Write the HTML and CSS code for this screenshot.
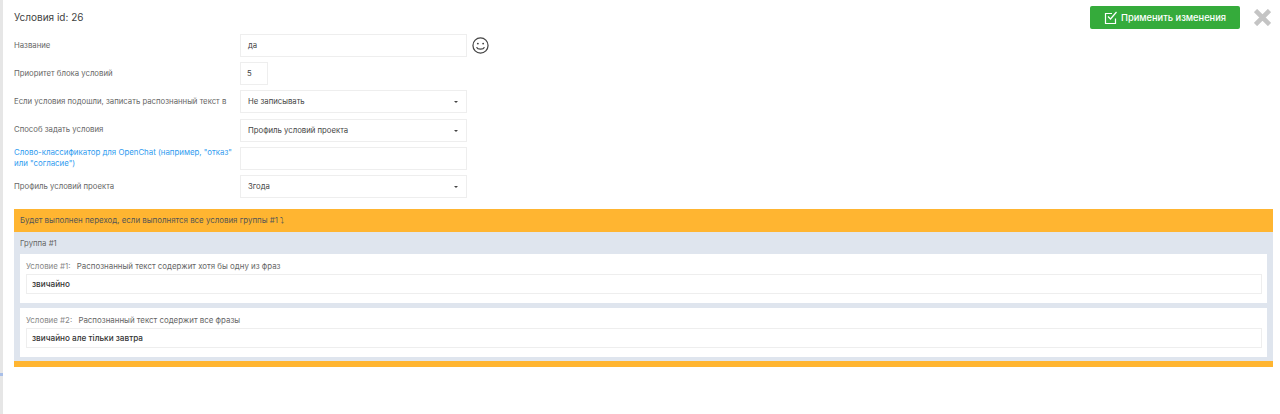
FILE: index.html
```html
<!DOCTYPE html>
<html lang="ru">
<head>
    <meta charset="UTF-8">
    <title>Условия id: 26</title>
    <link rel="stylesheet" href="styles.css">
</head>
<body>
    <div class="modal">
        <div class="modal-head">
            <div class="modal-title">Условия id: 26</div>
            <button class="btn-apply" type="button">
                <svg class="btn-icon" width="14" height="14" viewBox="0 0 14 14" fill="none" stroke="#fff" stroke-width="1.2">
                    <path d="M11.5 7.5V12.5H1.5V2.5H8"/>
                    <path d="M4 5.5L6.5 8L12.5 1"/>
                </svg>
                Применить изменения
            </button>
            <svg class="btn-close" width="17" height="17" viewBox="0 0 17 17" stroke="#c4c4c4" stroke-width="4.6">
                <path d="M1.5 1.5L15.5 15.5M15.5 1.5L1.5 15.5"/>
            </svg>
        </div>

        <div class="form">
            <div class="form-row">
                <label class="form-label">Название</label>
                <div class="field field-wide">да</div>
                <svg class="smile" width="17" height="17" viewBox="0 0 18 18" fill="none" stroke="#444" stroke-width="1.3">
                    <circle cx="9" cy="9" r="8"/>
                    <circle cx="6.2" cy="7" r="1" fill="#444" stroke="none"/>
                    <circle cx="11.8" cy="7" r="1" fill="#444" stroke="none"/>
                    <path d="M4.8 10.8C6 13.6 12 13.6 13.2 10.8"/>
                </svg>
            </div>
            <div class="form-row">
                <label class="form-label">Приоритет блока условий</label>
                <div class="field field-small">5</div>
            </div>
            <div class="form-row">
                <label class="form-label">Если условия подошли, записать распознанный текст в</label>
                <div class="field field-wide field-select">Не записывать<span class="caret"></span></div>
            </div>
            <div class="form-row">
                <label class="form-label">Способ задать условия</label>
                <div class="field field-wide field-select">Профиль условий проекта<span class="caret"></span></div>
            </div>
            <div class="form-row">
                <label class="form-label form-label-link">Слово-классификатор для OpenChat (например, "отказ" или "согласие")</label>
                <div class="field field-wide"></div>
            </div>
            <div class="form-row">
                <label class="form-label">Профиль условий проекта</label>
                <div class="field field-wide field-select">Згода<span class="caret"></span></div>
            </div>
        </div>

        <div class="rules">
            <div class="rules-head">Будет выполнен переход, если выполнятся все условия группы #1 ⤵</div>
            <div class="group">
                <div class="group-title">Группа #1</div>
                <div class="cond">
                    <div class="cond-title"><span class="cond-num">Условие #1:</span> Распознанный текст содержит хотя бы одну из фраз</div>
                    <div class="cond-input">звичайно</div>
                </div>
                <div class="cond">
                    <div class="cond-title"><span class="cond-num">Условие #2:</span> Распознанный текст содержит все фразы</div>
                    <div class="cond-input">звичайно але тільки завтра</div>
                </div>
            </div>
        </div>
    </div>
</body>
</html>
```

FILE: styles.css
```css
body {
    margin: 0;
    background-color: #fff;
    font-family: Inter, "Noto Sans", sans-serif;
    font-size: 7.75px;
    color: #555;
    overflow: hidden;
}

.modal {
    box-sizing: border-box;
    position: relative;
    min-height: 100vh;
    padding: 6px 7px 0 11px;
    border-left: 3px solid #e6e6e6;
}

/* кусочек синей полоски за окном */
.modal::before {
    content: "";
    position: absolute;
    left: -3px;
    top: 373px;
    width: 3px;
    height: 3px;
    background-color: #a9bfe8;
}

.modal-head {
    display: flex;
    align-items: center;
    height: 23px;
}

.modal-title {
    flex: 1;
    padding-bottom: 1px;
    font-size: 10px;
    color: #444;
}

.btn-apply {
    display: flex;
    align-items: center;
    justify-content: center;
    gap: 3px;
    width: 150px;
    height: 23px;
    border: none;
    border-radius: 2px;
    background-color: #35ab3b;
    color: #fff;
    font-family: inherit;
    font-size: 9.3px;
    font-weight: 500;
}

.btn-close {
    margin-left: 14px;
    margin-right: 2px;
}

.form {
    margin-top: 5px;
    display: flex;
    flex-direction: column;
    gap: 5.2px;
}

.form-row {
    display: flex;
    align-items: center;
    min-height: 23px;
}

.form-label {
    width: 226px;
    line-height: 11.5px;
    color: #666;
}

.form-label-link {
    font-size: 7.85px;
    color: #2f9bef;
}

.field {
    box-sizing: border-box;
    height: 23px;
    line-height: 21px;
    padding: 0 7px;
    border: 1px solid #eee;
    color: #444;
}

.field-wide {
    width: 227px;
}

.field-small {
    width: 28px;
    padding: 0 6px;
}

.field-select {
    position: relative;
}

.caret {
    position: absolute;
    right: 8px;
    top: 10px;
    border-left: 2.5px solid transparent;
    border-right: 2.5px solid transparent;
    border-top: 2.5px solid #444;
}

.smile {
    margin-left: 5px;
}

.rules {
    margin-top: 11px;
    border-bottom: 6px solid #ffb531;
}

.rules-head {
    height: 23px;
    line-height: 23px;
    padding-left: 6px;
    background-color: #ffb531;
    font-size: 7.9px;
    color: #555;
}

.group {
    padding: 0 6px 4px;
    background-color: #dfe5ee;
}

.group-title {
    height: 22px;
    line-height: 22px;
    color: #666;
}

.cond {
    padding: 5px 5px 9px 6px;
    margin-bottom: 5px;
    background-color: #fff;
}

.cond:last-child {
    margin-bottom: 0;
}

.cond-title {
    height: 15px;
    line-height: 14px;
    font-size: 7.9px;
    color: #666;
}

.cond-num {
    color: #888;
    margin-right: 4px;
}

.cond-input {
    box-sizing: border-box;
    height: 20px;
    line-height: 18px;
    padding: 0 5px;
    border: 1px solid #eee;
    color: #333;
    font-size: 8.2px;
    font-weight: 500;
}
```
